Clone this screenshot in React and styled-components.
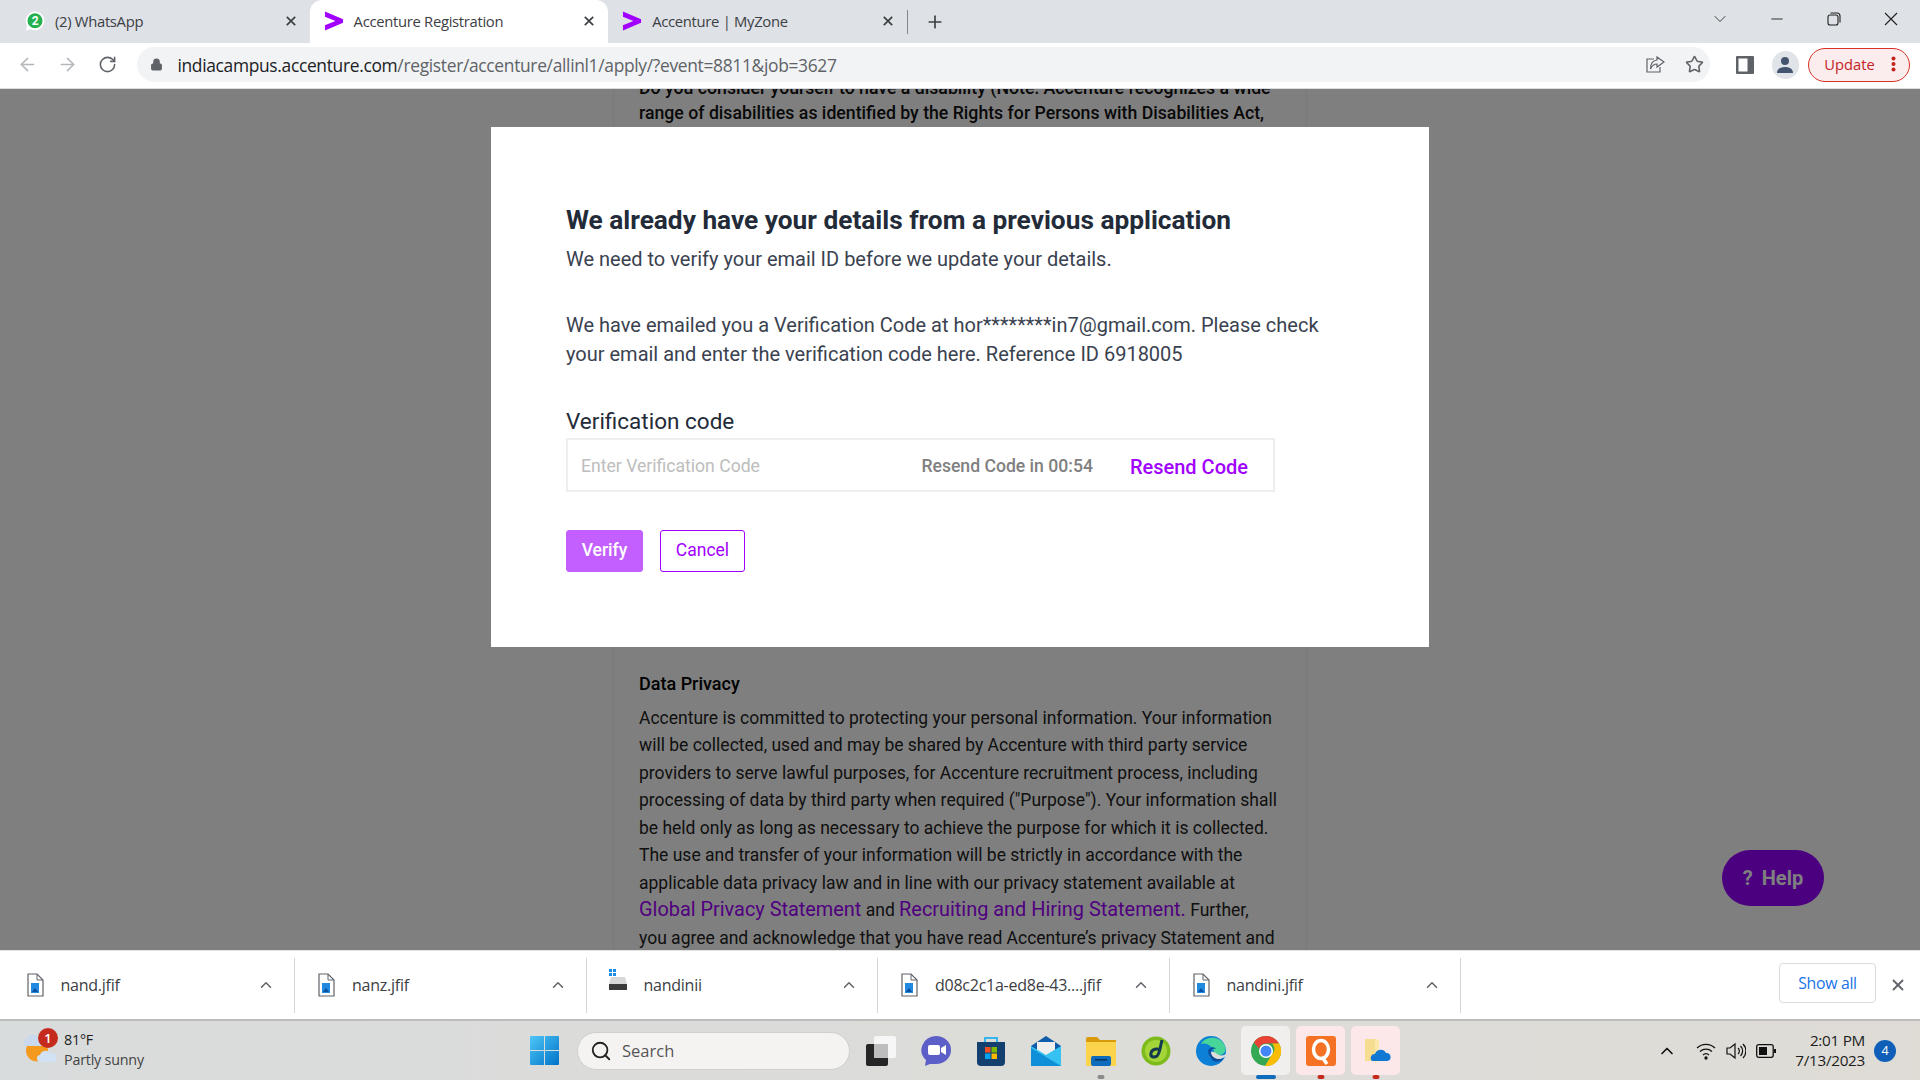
import React from 'react';
import styled, { createGlobalStyle } from 'styled-components';
import { ArrowLeft, ArrowRight, RotateCw, Lock, Star, X, Plus, ChevronDown, ChevronUp, Minus, Search } from 'lucide-react';

const GlobalStyle = createGlobalStyle`
  html, body { margin: 0; padding: 0; height: 100%; overflow: hidden; }
  * { box-sizing: border-box; }
  body { font-family: Roboto, "Liberation Sans", sans-serif; }
`;

const UI_FONT = '"Open Sans", "Noto Sans", sans-serif';

const Screen = styled.div`
  width: 1920px;
  height: 1080px;
  display: flex;
  flex-direction: column;
  overflow: hidden;
`;

/* browser tabs */
const TabStrip = styled.div`
  height: 43px;
  flex: none;
  background: #dee1e6;
  display: flex;
  align-items: stretch;
  padding-left: 11px;
  font-family: ${UI_FONT};
`;

const Tab = styled.div`
  width: 298.6px;
  display: flex;
  align-items: center;
  padding: 0 14px 2px;
  gap: 10px;
  font-size: 14.8px;
  letter-spacing: -0.3px;
  color: #3c4043;
  border-radius: 12px 12px 0 0;
  background: ${props => (props.$active ? '#fff' : 'transparent')};
`;

const TabIcon = styled.span`
  width: 20px;
  height: 22px;
  flex: none;
  display: flex;
  align-items: center;
  justify-content: center;
`;

const TabTitle = styled.span`
  flex: 1;
  white-space: nowrap;
`;

const TabDivider = styled.div`
  width: 1px;
  height: 24px;
  align-self: center;
  background: #80868b;
`;

const NewTab = styled.div`
  width: 54px;
  display: flex;
  align-items: center;
  justify-content: center;
  color: #3c4043;
`;

const WindowControls = styled.div`
  margin-left: auto;
  display: flex;
  align-items: center;
  padding: 0 1px 5px 0;
  color: #1f1f1f;
`;

const WindowButton = styled.div`
  width: 57px;
  display: flex;
  justify-content: center;
`;

/* address bar */
const Toolbar = styled.div`
  height: 46px;
  flex: none;
  background: #fff;
  border-bottom: 1px solid #dadce0;
  display: flex;
  align-items: center;
  padding: 0 10px 2px 8px;
  font-family: ${UI_FONT};
`;

const NavButton = styled.div`
  width: 40px;
  display: flex;
  justify-content: center;
  color: ${props => (props.$disabled ? '#b4b7bb' : '#5f6368')};
`;

const Omnibox = styled.div`
  width: 1580px;
  height: 35px;
  margin-left: 10px;
  border-radius: 18px;
  background: #f1f3f4;
  display: flex;
  align-items: center;
  padding: 0 6px 0 13px;
  font-size: 17.4px;
  letter-spacing: -0.32px;
  color: #5f6368;
`;

const Host = styled.span`
  color: #202124;
  margin-left: 14px;
`;

const OmniActions = styled.div`
  margin-left: auto;
  display: flex;
  gap: 20px;
  align-items: center;
  color: #5f6368;
`;

const PanelSlot = styled.span`
  width: 18px;
  margin-left: 26px;
  display: flex;
`;

const Avatar = styled.div`
  width: 28px;
  height: 28px;
  border-radius: 50%;
  background: #e0e3e8;
  display: flex;
  align-items: center;
  justify-content: center;
  margin: 0 9px 0 18px;
`;

const UpdatePill = styled.div`
  width: 102px;
  height: 34px;
  border: 1px solid #d93025;
  border-radius: 17px;
  background: #fbeced;
  color: #c5221f;
  font-size: 14.7px;
  display: flex;
  align-items: center;
  justify-content: space-between;
  padding: 0 13px 1px 15px;
`;

/* page behind the modal */
const Page = styled.main`
  flex: 1;
  min-height: 0;
  position: relative;
  overflow: hidden;
  background: #fff;
`;

const Card = styled.article`
  width: 694px;
  margin: -13px 0 0 613px;
  padding: 0 25px;
  border: solid #f4f4f4;
  border-width: 0 1px;
  font-size: 17.5px;
  line-height: 27.5px;
  color: #222;
`;

const DisabilityText = styled.p`
  margin: 0;
  height: 594px;
  font-size: 17.7px;
  line-height: 24.5px;
  font-weight: 500;
  color: #111;
`;

const PrivacyHeading = styled.h3`
  margin: 0 0 7px;
  font-size: 18px;
  line-height: 27.5px;
  font-weight: 500;
  color: #000;
`;

const PrivacyText = styled.p`
  margin: 0;
`;

const PrivacyLink = styled.a`
  color: #a100ff;
  font-size: 19.9px;
  line-height: 20px;
`;

const HelpButton = styled.div`
  position: absolute;
  left: 1722px;
  top: 761px;
  width: 102px;
  height: 56px;
  border-radius: 28px;
  background: #9600ff;
  color: #fff;
  font-size: 20px;
  font-weight: 700;
  display: flex;
  align-items: center;
  justify-content: center;
  gap: 9px;
`;

const Scrim = styled.div`
  position: absolute;
  inset: 0;
  background: rgba(0, 0, 0, 0.5);
`;

const Modal = styled.section`
  position: absolute;
  left: 491px;
  top: 38px;
  width: 938px;
  height: 520px;
  background: #fff;
  padding: 74px 75px 0;
`;

const ModalTitle = styled.h2`
  margin: 0;
  font-size: 26.25px;
  line-height: 38px;
  font-weight: 700;
  color: #232b39;
`;

const ModalSub = styled.p`
  margin: 6px 0 0;
  font-size: 20px;
  line-height: 29px;
  color: #3a4250;
`;

const ModalBody = styled.p`
  margin: 37px 0 0;
  width: 780px;
  font-size: 20px;
  line-height: 29px;
  color: #3a4250;
`;

const FieldLabel = styled.label`
  display: block;
  margin-top: 37px;
  font-size: 22.5px;
  line-height: 30px;
  color: #232b39;
`;

const CodeField = styled.div`
  width: 709px;
  height: 54px;
  margin-top: 2px;
  border: 2px solid #eeeeee;
  display: flex;
  align-items: center;
  padding: 1px 25px 0 13px;
  font-size: 17.6px;
`;

const Placeholder = styled.span`
  color: #bdbdbd;
  flex: 1;
`;

const Countdown = styled.span`
  color: #808080;
  font-weight: 500;
`;

const ResendLink = styled.a`
  color: #a100ff;
  font-size: 20px;
  font-weight: 500;
  margin: 2px 0 0 37px;
`;

const ModalActions = styled.div`
  display: flex;
  gap: 17px;
  margin-top: 38px;
`;

const ActionButton = styled.button`
  height: 42px;
  width: ${props => (props.$primary ? '77px' : '85px')};
  border: 1px solid #a100ff;
  border-radius: 3px;
  background: ${props => (props.$primary ? '#c35fff' : '#fff')};
  border-color: ${props => (props.$primary ? '#c35fff' : '#a100ff')};
  color: ${props => (props.$primary ? '#fff' : '#a100ff')};
  font-family: Roboto, sans-serif;
  font-size: 17.5px;
  font-weight: ${props => (props.$primary ? 500 : 400)};
  padding: 0 0 2px;
`;

/* downloads shelf */
const Shelf = styled.div`
  height: 71px;
  flex: none;
  background: #fff;
  border-top: 1px solid #e3e3e3;
  border-bottom: 2px solid #bdbdbd;
  display: flex;
  align-items: center;
  padding-left: 3.5px;
  font-family: ${UI_FONT};
`;

const ShelfItem = styled.div`
  width: 291.5px;
  height: 55px;
  flex: none;
  border-right: 1px solid #d5d5d5;
  display: flex;
  align-items: center;
  padding: 0 19px 0 21px;
  font-size: 16px;
  letter-spacing: -0.25px;
  color: #3c4043;
  gap: 16px;
`;

const ShelfName = styled.span`
  flex: 1;
  white-space: nowrap;
`;

const ShowAll = styled.div`
  margin-left: auto;
  width: 97px;
  height: 40px;
  margin-bottom: 4px;
  border: 1px solid #dadce0;
  border-radius: 4px;
  color: #1a73e8;
  font-size: 15.8px;
  letter-spacing: -0.3px;
  display: flex;
  align-items: center;
  justify-content: center;
`;

const ShelfClose = styled.div`
  width: 44px;
  display: flex;
  justify-content: center;
  color: #5f6368;
`;

/* windows taskbar */
const Taskbar = styled.footer`
  height: 59px;
  flex: none;
  background: linear-gradient(90deg, #d9dcdc 0%, #dcdcd9 50%, #dfdcd6 100%);
  display: flex;
  align-items: center;
  font-family: ${UI_FONT};
`;

const Weather = styled.div`
  width: 530px;
  flex: none;
  display: flex;
  align-items: center;
  padding-left: 24px;
  gap: 8px;
  position: relative;
`;

const WeatherBadge = styled.span`
  position: absolute;
  left: 38px;
  top: -2px;
  width: 20px;
  height: 20px;
  border-radius: 50%;
  background: #c42b1c;
  color: #fff;
  font-size: 13px;
  font-weight: 600;
  display: flex;
  align-items: center;
  justify-content: center;
`;

const WeatherText = styled.div`
  font-size: 14.3px;
  line-height: 20px;
  letter-spacing: -0.2px;
  color: #1c1c1c;
  padding-bottom: 2px;
  span { display: block; color: #444; }
`;

const SearchBox = styled.div`
  width: 273px;
  height: 38px;
  margin: 0 3px 0 18px;
  border-radius: 19px;
  background: #f4f3f2;
  border: 1px solid #cfcfcc;
  display: flex;
  align-items: center;
  padding-left: 12px;
  gap: 10px;
  font-size: 16.5px;
  color: #555;
`;

const TaskSlot = styled.div`
  width: 55px;
  height: 50px;
  flex: none;
  display: flex;
  align-items: center;
  justify-content: center;
  position: relative;
`;

const TaskTile = styled.div`
  width: 49px;
  height: 49px;
  border-radius: 5px;
  background: ${props => (props.$alert ? '#fce8e8' : '#f0efed')};
  display: flex;
  align-items: center;
  justify-content: center;
`;

const TaskMark = styled.span`
  position: absolute;
  bottom: -3px;
  left: 50%;
  transform: translateX(-50%);
  height: 4px;
  width: ${props => props.$width}px;
  border-radius: 2px;
  background: ${props => props.$color};
`;

const Tray = styled.div`
  margin-left: auto;
  display: flex;
  align-items: center;
  padding-right: 24px;
  color: #111;
`;

const TraySpacer = styled.span`
  width: 14px;
`;

const TrayIcon = styled.div`
  width: 30px;
  display: flex;
  justify-content: center;
`;

const Clock = styled.div`
  width: 82px;
  margin-left: 2px;
  padding-bottom: 2px;
  text-align: right;
  font-size: 15.3px;
  line-height: 20px;
  letter-spacing: -0.3px;
  color: #1c1c1c;
`;

const NotifyBadge = styled.span`
  width: 22px;
  height: 22px;
  margin-left: 9px;
  border-radius: 50%;
  background: #0f5fb8;
  color: #fff;
  font-size: 12.5px;
  display: flex;
  align-items: center;
  justify-content: center;
`;

const AccentureMark = () => (
  <svg width="21" height="20" viewBox="0 0 21 20">
    <path fill="#a100ff" d="M1 0l19 8.2v3.6L1 20v-5.500L12 10 1 5.500z" />
  </svg>
);

const WhatsAppIcon = () => (
  <svg width="20" height="20" viewBox="0 0 20 20">
    <path fill="#fff" d="M10 .5a9.300 9.300 0 0 0-8 14L.8 19.500l5.200-1.300A9.300 9.300 0 1 0 10 .5z" />
    <circle cx="10" cy="9.800" r="7.500" fill="#25b14f" />
    <text x="10" y="14" textAnchor="middle" fontSize="12" fontWeight="700" fill="#fff" fontFamily="Roboto">2</text>
  </svg>
);

const RestoreIcon = () => (
  <svg width="14" height="14" viewBox="0 0 14 14" fill="none" stroke="currentColor" strokeWidth="1.1">
    <rect x="1" y="3" width="10" height="10" rx="2" />
    <path d="M3.5 1h6.5a3 3 0 0 1 3 3v6.5" />
  </svg>
);

const ThinClose = () => (
  <svg width="14" height="14" viewBox="0 0 14 14" stroke="currentColor" strokeWidth="1.1">
    <path d="M1 1l12 12M13 1L1 13" />
  </svg>
);

const TabClose = () => (
  <svg width="10" height="10" viewBox="0 0 10 10" stroke="#3c4043" strokeWidth="1.7">
    <path d="M.8.8l8.4 8.4M9.2.8L.8 9.2" />
  </svg>
);

const ShareIcon = () => (
  <svg width="19" height="17" viewBox="0 0 19 17" fill="none" stroke="#5f6368" strokeWidth="1.2">
    <path d="M8 3H1v13h13v-5" />
    <path d="M11 1l7 5-7 5V8C8 8 6 9.5 4.5 13 4.5 8 7 4.5 11 4z" />
  </svg>
);

const SidePanelIcon = () => (
  <svg width="18" height="18" viewBox="0 0 18 18">
    <rect width="18" height="18" rx="1" fill="#5f6368" />
    <rect x="2.5" y="2.5" width="9" height="13" fill="#fff" />
  </svg>
);

const AvatarIcon = () => (
  <svg width="18" height="18" viewBox="0 0 18 18" fill="#44546f">
    <circle cx="9" cy="5" r="4" />
    <path d="M1 17c0-4 3.5-6 8-6s8 2 8 6z" />
  </svg>
);

const FileIcon = () => (
  <svg width="20" height="24" viewBox="0 0 20 24">
    <path d="M3 1h9l6 6v16H3z" fill="#fff" stroke="#5f6368" strokeWidth="1.2" />
    <path d="M12 1v6h6" fill="none" stroke="#5f6368" strokeWidth="1" />
    <rect x="6" y="10" width="8" height="10" fill="#1f8ae0" />
    <path d="M7 19l3-4 3 4z" fill="#0b4f9e" />
  </svg>
);

const DriveIcon = () => (
  <svg width="20" height="24" viewBox="0 0 20 24" style={{ marginTop: -8 }}>
    <path fill="#1a8ae5" d="M1 0h3v3H1zM5 0h3v3H5zM1 4h3v3H1zM5 4h3v3H5z" />
    <path fill="#d8d8d8" d="M3 8h14l2 7H1z" />
    <rect x="1" y="15" width="18" height="6" fill="#3a3a3a" />
  </svg>
);

const WeatherIcon = () => (
  <svg width="32" height="42" viewBox="0 0 32 42">
    <circle cx="13" cy="20.500" r="11" fill="#f39a1f" />
    <path fill="#c9d9ee" d="M2 16a3.500 3.500 0 0 1 1-7 6 6 0 0 1 11-1 4 4 0 0 1 4 8z" />
    <path fill="#d2e2f5" d="M17 32a3.500 3.500 0 0 1-1-7 6 6 0 0 1 11-1 4 4 0 0 1 4 8z" />
  </svg>
);

const WindowsLogo = () => (
  <svg width="29" height="29" viewBox="0 0 29 29" style={{ flex: 'none' }}>
    <defs>
      <linearGradient id="win" x1="0" y1="0" x2="1" y2="1">
        <stop offset="0" stopColor="#4fc6f7" />
        <stop offset="1" stopColor="#0072c8" />
      </linearGradient>
    </defs>
    <path fill="url(#win)" d="M0 1a1 1 0 0 1 1-1h13v14H0zM15 0h13a1 1 0 0 1 1 1v13H15zM0 15h14v14H1a1 1 0 0 1-1-1zM15 15h14v13a1 1 0 0 1-1 1H15z" />
  </svg>
);

const TaskViewIcon = () => (
  <svg width="30" height="30" viewBox="0 0 30 30">
    <rect x="8" y="0" width="22" height="22" rx="2" fill="#f6f6f6" />
    <rect x="0" y="8" width="22" height="22" rx="2" fill="#262626" />
    <rect x="8" y="8" width="14" height="14" fill="#bdbdbd" />
  </svg>
);

const MeetIcon = () => (
  <svg width="30" height="30" viewBox="0 0 30 30">
    <path fill="#5b5fc7" d="M15 0a15 14 0 0 1 0 28h-6l-5 2 1-6A15 14 0 0 1 15 0z" />
    <rect x="7" y="9" width="12" height="10" rx="2" fill="#fff" />
    <path fill="#fff" d="M20 12l5-3v10l-5-3z" />
  </svg>
);

const StoreIcon = () => (
  <svg width="30" height="30" viewBox="0 0 30 30">
    <path fill="none" stroke="#35b6ee" strokeWidth="2" d="M9 7V2h12v5" />
    <path fill="#14406f" d="M1 6h28v20a4 4 0 0 1-4 4H5a4 4 0 0 1-4-4z" />
    <path fill="#f25022" d="M9 11h5.500v5.500H9z" />
    <path fill="#7fba00" d="M15.500 11H21v5.500h-5.500z" />
    <path fill="#00a4ef" d="M9 17.500h5.500V23H9z" />
    <path fill="#ffb900" d="M15.500 17.500H21V23h-5.500z" />
  </svg>
);

const MailIcon = () => (
  <svg width="30" height="30" viewBox="0 0 30 30">
    <path fill="#0f5ca8" d="M15 0l15 10v4H0v-4z" />
    <path fill="#eee" d="M6 6h18v14H6z" />
    <path fill="#35c1f1" d="M0 10l15 9 15-9v20H0z" />
    <path fill="#0f8fd8" d="M0 30V12l30 18z" />
  </svg>
);

const ExplorerIcon = () => (
  <svg width="30" height="30" viewBox="0 0 30 30">
    <path fill="#d99a0b" d="M0 3a2 2 0 0 1 2-2h9l3 3h16v6H0z" />
    <path fill="#fbd34c" d="M0 6h30v24H0z" />
    <rect x="5" y="20" width="20" height="10" rx="2" fill="#0f6cbd" />
    <rect x="9" y="23" width="12" height="1.500" fill="#07355f" />
  </svg>
);

const DreamweaverIcon = () => (
  <svg width="30" height="30" viewBox="0 0 30 30">
    <circle cx="15" cy="15" r="14.500" fill="#7dbb1c" />
    <circle cx="15" cy="15" r="11" fill="#a4d63a" />
    <path fill="none" stroke="#143a4f" strokeWidth="3" d="M21 4c-2 8-2 13-5 16-3 2-7 1-6-3s6-5 10-3" />
  </svg>
);

const EdgeIcon = () => (
  <svg width="30" height="30" viewBox="0 0 30 30">
    <circle cx="15" cy="15" r="15" fill="#0c7fd6" />
    <path fill="#47d59a" d="M5 8C9 0 24-1 29 10c2 6-2 9-6 9-3 0-6-2-5-4-2-5-8-9-13-7z" />
    <path fill="#dcdcd9" d="M13 17c0 6 5 9 11 7l6-4v-2c-2 2-8 2-10-1-2-1-6-2-7 0z" />
    <path fill="#0a4f9e" d="M12 15c1-4 6-5 8-2-3-1-5 0-5 3 0 5 6 9 13 6-4 6-14 6-16-7z" />
  </svg>
);

const ChromeIcon = () => (
  <svg width="30" height="30" viewBox="0 0 30 30">
    <circle cx="15" cy="15" r="15" fill="#34a853" />
    <path fill="#ea4335" d="M15 0a15 15 0 0 1 13 7.500H15a7.500 7.500 0 0 0-7 5L2.800 6.300A15 15 0 0 1 15 0z" />
    <path fill="#fbbc04" d="M28 7.500A15 15 0 0 1 14 30l6.500-11a7.500 7.500 0 0 0 .5-11.500z" />
    <circle cx="15" cy="15" r="7" fill="#fff" />
    <circle cx="15" cy="15" r="5.500" fill="#4285f4" />
  </svg>
);

const QuickHealIcon = () => (
  <svg width="30" height="30" viewBox="0 0 30 30">
    <rect width="30" height="30" rx="3" fill="#f57224" />
    <ellipse cx="15" cy="13.500" rx="7.500" ry="9" fill="none" stroke="#fff" strokeWidth="3.500" />
    <path stroke="#fff" strokeWidth="3.500" d="M16 21l5 7" />
  </svg>
);

const OneDriveFolderIcon = () => (
  <svg width="30" height="30" viewBox="0 0 30 30">
    <path fill="#f6dd8f" d="M4 3h10v22H4z" />
    <path fill="#fce9a9" d="M14 3l4 1v19l-4 5z" />
    <path fill="#0f78d4" d="M11 25a4 4 0 0 1 3-7 6 6 0 0 1 11-1 4 4 0 0 1 1 8z" />
  </svg>
);

const WifiIcon = () => (
  <svg width="20" height="18" viewBox="0 0 20 18" fill="none" stroke="#111" strokeWidth="1.300">
    <path d="M1 6a13 13 0 0 1 18 0M4 9.500a9 9 0 0 1 12 0M7 13a4.500 4.500 0 0 1 6 0" />
    <circle cx="10" cy="16" r="1" fill="#111" />
  </svg>
);

const SoundIcon = () => (
  <svg width="20" height="18" viewBox="0 0 20 18" fill="none" stroke="#111" strokeWidth="1.200">
    <path d="M1 6v6h3l5 4V2L4 6zM12 6a4 4 0 0 1 0 6M14.500 4a7 7 0 0 1 0 10M17 2a10 10 0 0 1 0 14" />
  </svg>
);

const BatteryIcon = () => (
  <svg width="20" height="14" viewBox="0 0 20 14">
    <rect x=".7" y=".7" width="16.500" height="12.600" rx="2" fill="none" stroke="#111" strokeWidth="1.300" />
    <rect x="3" y="3" width="8" height="8" fill="#111" />
    <rect x="18" y="5" width="2" height="4" fill="#111" />
  </svg>
);

const tabs = [
  { title: '(2) WhatsApp', icon: <WhatsAppIcon /> },
  { title: 'Accenture Registration', icon: <AccentureMark />, active: true },
  { title: 'Accenture | MyZone', icon: <AccentureMark /> },
];

const downloads = [
  { name: 'nand.jfif', icon: <FileIcon /> },
  { name: 'nanz.jfif', icon: <FileIcon /> },
  { name: 'nandinii', icon: <DriveIcon /> },
  { name: 'd08c2c1a-ed8e-43....jfif', icon: <FileIcon /> },
  { name: 'nandini.jfif', icon: <FileIcon /> },
];

const taskApps = [
  { icon: <TaskViewIcon /> },
  { icon: <MeetIcon /> },
  { icon: <StoreIcon /> },
  { icon: <MailIcon /> },
  { icon: <ExplorerIcon />, mark: { color: '#8a8a8a', width: 7 } },
  { icon: <DreamweaverIcon /> },
  { icon: <EdgeIcon /> },
  { icon: <ChromeIcon />, tile: true, mark: { color: '#0f6cbd', width: 20 } },
  { icon: <QuickHealIcon />, tile: true, alert: true, mark: { color: '#c42b1c', width: 7 } },
  { icon: <OneDriveFolderIcon />, tile: true, alert: true, mark: { color: '#c42b1c', width: 7 } },
];

const App = () => (
  <Screen>
    <GlobalStyle />
    <TabStrip>
      {tabs.map(tab => (
        <Tab key={tab.title} $active={tab.active}>
          <TabIcon>{tab.icon}</TabIcon>
          <TabTitle>{tab.title}</TabTitle>
          <TabClose />
        </Tab>
      ))}
      <TabDivider />
      <NewTab><Plus size={20} strokeWidth={2} /></NewTab>
      <WindowControls>
        <WindowButton><ChevronDown size={20} strokeWidth={1} /></WindowButton>
        <WindowButton><Minus size={18} strokeWidth={1.2} /></WindowButton>
        <WindowButton><RestoreIcon /></WindowButton>
        <WindowButton><ThinClose /></WindowButton>
      </WindowControls>
    </TabStrip>

    <Toolbar>
      <NavButton $disabled><ArrowLeft size={21} strokeWidth={1.8} /></NavButton>
      <NavButton $disabled><ArrowRight size={21} strokeWidth={1.8} /></NavButton>
      <NavButton><RotateCw size={19} strokeWidth={2} /></NavButton>
      <Omnibox>
        <Lock size={13} fill="#5f6368" strokeWidth={2} />
        <Host>indiacampus.accenture.com</Host>/register/accenture/allinl1/apply/?event=8811&amp;job=3627
        <OmniActions>
          <ShareIcon />
          <Star size={19} strokeWidth={2} />
        </OmniActions>
      </Omnibox>
      <PanelSlot><SidePanelIcon /></PanelSlot>
      <Avatar><AvatarIcon /></Avatar>
      <UpdatePill>
        Update
        <svg width="5" height="16" viewBox="0 0 5 16" fill="#c5221f">
          <circle cx="2.500" cy="2.500" r="2" />
          <circle cx="2.500" cy="8" r="2" />
          <circle cx="2.500" cy="13.500" r="2" />
        </svg>
      </UpdatePill>
    </Toolbar>

    <Page>
      <Card>
        <DisabilityText>
          Do you consider yourself to have a disability (Note: Accenture recognizes a wide
          range of disabilities as identified by the Rights for Persons with Disabilities Act,
        </DisabilityText>
        <PrivacyHeading>Data Privacy</PrivacyHeading>
        <PrivacyText>
          Accenture is committed to protecting your personal information. Your information
          will be collected, used and may be shared by Accenture with third party service
          providers to serve lawful purposes, for Accenture recruitment process, including
          processing of data by third party when required ("Purpose"). Your information shall
          be held only as long as necessary to achieve the purpose for which it is collected.
          The use and transfer of your information will be strictly in accordance with the
          applicable data privacy law and in line with our privacy statement available at{' '}
          <PrivacyLink>Global Privacy Statement</PrivacyLink> and{' '}
          <PrivacyLink>Recruiting and Hiring Statement.</PrivacyLink> Further,<br />
          you agree and acknowledge that you have read Accenture’s privacy Statement and
        </PrivacyText>
      </Card>
      <HelpButton><span>?</span>Help</HelpButton>
      <Scrim />
      <Modal>
        <ModalTitle>We already have your details from a previous application</ModalTitle>
        <ModalSub>We need to verify your email ID before we update your details.</ModalSub>
        <ModalBody>
          We have emailed you a Verification Code at hor********in7@gmail.com. Please check
          your email and enter the verification code here. Reference ID 6918005
        </ModalBody>
        <FieldLabel>Verification code</FieldLabel>
        <CodeField>
          <Placeholder>Enter Verification Code</Placeholder>
          <Countdown>Resend Code in 00:54</Countdown>
          <ResendLink>Resend Code</ResendLink>
        </CodeField>
        <ModalActions>
          <ActionButton $primary>Verify</ActionButton>
          <ActionButton>Cancel</ActionButton>
        </ModalActions>
      </Modal>
    </Page>

    <Shelf>
      {downloads.map(item => (
        <ShelfItem key={item.name}>
          {item.icon}
          <ShelfName>{item.name}</ShelfName>
          <ChevronUp size={18} strokeWidth={2} color="#5f6368" />
        </ShelfItem>
      ))}
      <ShowAll>Show all</ShowAll>
      <ShelfClose><X size={18} strokeWidth={2.4} /></ShelfClose>
    </Shelf>

    <Taskbar>
      <Weather>
        <WeatherIcon />
        <WeatherBadge>1</WeatherBadge>
        <WeatherText>81°F<span>Partly sunny</span></WeatherText>
      </Weather>
      <WindowsLogo />
      <SearchBox>
        <Search size={22} strokeWidth={2} color="#222" />
        Search
      </SearchBox>
      {taskApps.map((app, i) => (
        <TaskSlot key={i}>
          {app.tile ? <TaskTile $alert={app.alert}>{app.icon}</TaskTile> : app.icon}
          {app.mark && <TaskMark $color={app.mark.color} $width={app.mark.width} />}
        </TaskSlot>
      ))}
      <Tray>
        <ChevronUp size={20} strokeWidth={2} />
        <TraySpacer />
        <TrayIcon><WifiIcon /></TrayIcon>
        <TrayIcon><SoundIcon /></TrayIcon>
        <TrayIcon><BatteryIcon /></TrayIcon>
        <Clock>2:01 PM<br />7/13/2023</Clock>
        <NotifyBadge>4</NotifyBadge>
      </Tray>
    </Taskbar>
  </Screen>
);

export default App;
